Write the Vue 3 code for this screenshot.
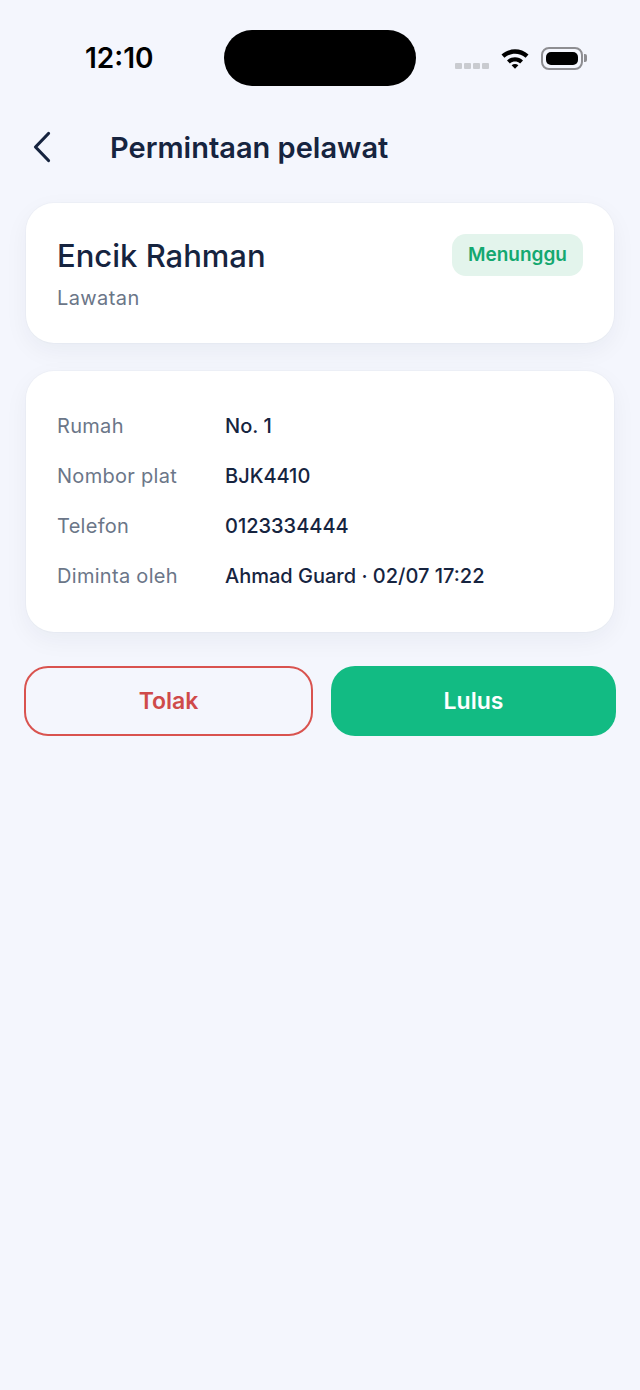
<template>
  <div class="screen">
    <div class="status-bar">
      <span class="clock">12:10</span>
      <div class="island"></div>
      <div class="status-icons">
        <div class="signal">
          <i v-for="n in 4" :key="n"></i>
        </div>
        <svg class="wifi" width="30" height="22" viewBox="0 0 30 22">
          <path d="M1.5 7.6C9.3 .6 20.7 .6 28.5 7.6L25.6 10.8C19.5 5.4 10.5 5.4 4.4 10.8Z" fill="#000" />
          <path d="M7 13.4C11.7 9.3 18.3 9.3 23 13.4L20.1 16.4C17 13.9 13 13.9 9.9 16.4Z" fill="#000" />
          <path d="M11.6 18.2C13.7 16.7 16.3 16.7 18.4 18.2L15 21.8Z" fill="#000" />
        </svg>
        <div class="battery">
          <div class="battery-fill"></div>
          <div class="battery-cap"></div>
        </div>
      </div>
    </div>

    <header class="top-bar">
      <svg class="back" width="20" height="32" viewBox="0 0 20 32">
        <path d="M16.5 2.5L3.5 16L16.5 29.5" fill="none" stroke="#16243f" stroke-width="3.2" stroke-linecap="round" stroke-linejoin="round" />
      </svg>
      <h1 class="title">Permintaan pelawat</h1>
    </header>

    <section class="card summary">
      <div>
        <div class="name">Encik Rahman</div>
        <div class="type">Lawatan</div>
      </div>
      <span class="badge">Menunggu</span>
    </section>

    <section class="card details">
      <div v-for="row in rows" :key="row.label" class="row">
        <span class="label">{{ row.label }}</span>
        <span class="value">{{ row.value }}</span>
      </div>
    </section>

    <div class="actions">
      <button class="btn reject">Tolak</button>
      <button class="btn approve">Lulus</button>
    </div>
  </div>
</template>

<script setup>
const rows = [
  { label: 'Rumah', value: 'No. 1' },
  { label: 'Nombor plat', value: 'BJK4410' },
  { label: 'Telefon', value: '0123334444' },
  { label: 'Diminta oleh', value: 'Ahmad Guard · 02/07 17:22' }
]
</script>

<style>
html, body {
  margin: 0;
  background: #f4f6fd;
}
</style>

<style scoped>
.screen {
  width: 640px;
  height: 1390px;
  box-sizing: border-box;
  padding: 30px 24px 0;
  background: #f4f6fd;
  font-family: Inter, sans-serif;
  color: #16243f;
  overflow: hidden;
}

.status-bar {
  display: flex;
  align-items: center;
  height: 56px;
}

.clock {
  width: 200px;
  padding-left: 61px;
  box-sizing: border-box;
  font-size: 28px;
  font-weight: 600;
  color: #000;
}

.island {
  width: 192px;
  height: 56px;
  border-radius: 28px;
  background: #000;
}

.status-icons {
  display: flex;
  align-items: center;
  margin-left: 39px;
}

.signal {
  display: flex;
  gap: 2px;
  margin-top: 16px;
  margin-right: 11px;
}

.signal i {
  width: 7px;
  height: 6px;
  border-radius: 1px;
  background: #c9cbd0;
}

.wifi {
  margin-right: 11px;
}

.battery {
  position: relative;
  width: 42px;
  height: 23px;
  box-sizing: border-box;
  padding: 3px;
  border: 2px solid #8e8e92;
  border-radius: 8px;
}

.battery-fill {
  height: 100%;
  border-radius: 5px;
  background: #000;
}

.battery-cap {
  position: absolute;
  right: -6px;
  top: 5px;
  width: 3px;
  height: 8px;
  border-radius: 0 2px 2px 0;
  background: #8e8e92;
}

.top-bar {
  display: flex;
  align-items: center;
  height: 50px;
  margin-top: 36px;
  padding-left: 8px;
}

.title {
  margin: 0 0 0 58px;
  font-size: 29px;
  font-weight: 600;
}

.card {
  margin: 0 2px;
  background: #fff;
  border-radius: 28px;
  box-shadow: 0 8px 24px rgba(22, 36, 63, 0.05), 0 0 0 1px rgba(22, 36, 63, 0.02);
}

.summary {
  display: flex;
  justify-content: space-between;
  align-items: flex-start;
  height: 140px;
  box-sizing: border-box;
  margin-top: 31px;
  padding: 31px 31px;
}

.name {
  font-size: 31px;
  font-weight: 500;
  line-height: 44px;
}

.type {
  margin-top: 8px;
  font-size: 20px;
  line-height: 24px;
  letter-spacing: 0.4px;
  color: #6b7688;
}

.badge {
  padding: 9px 16px;
  border-radius: 14px;
  background: #e3f4ec;
  color: #14a870;
  font-size: 19px;
  font-weight: 600;
  line-height: 24px;
}

.details {
  display: flex;
  flex-direction: column;
  gap: 26px;
  height: 261px;
  box-sizing: border-box;
  margin-top: 28px;
  padding: 43px 31px;
}

.row {
  display: flex;
  align-items: center;
  height: 24px;
  font-size: 20px;
}

.label {
  width: 168px;
  color: #6b7688;
  letter-spacing: 0.3px;
}

.value {
  font-weight: 500;
}

.actions {
  display: flex;
  gap: 18px;
  margin-top: 34px;
}

.btn {
  flex: 1;
  height: 70px;
  border-radius: 24px;
  font-family: inherit;
  font-size: 23px;
  font-weight: 600;
}

.reject {
  border: 2px solid #d9534f;
  background: transparent;
  color: #cf4a4a;
}

.approve {
  border: none;
  background: #12bb83;
  color: #fff;
}
</style>
